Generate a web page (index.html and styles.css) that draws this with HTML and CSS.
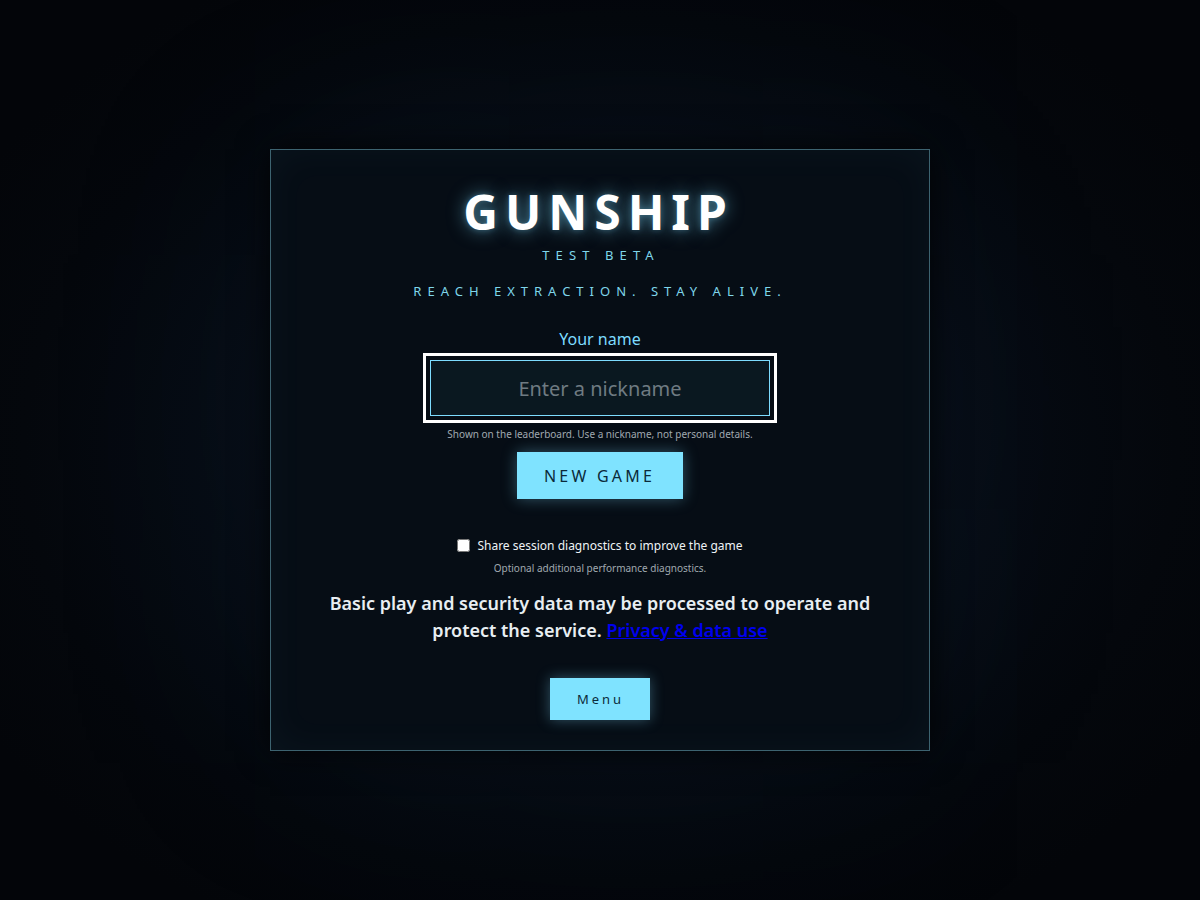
FILE: index.html
```html
<!DOCTYPE html>
<html lang="en">
<head>
<meta charset="utf-8">
<title>GUNSHIP</title>
<link rel="stylesheet" href="styles.css">
</head>
<body>
<main class="stage">
  <section class="panel">
    <h1 class="title">GUNSHIP</h1>
    <div class="subtitle">TEST BETA</div>
    <div class="tagline">REACH EXTRACTION. STAY ALIVE.</div>
    <label class="name-label" for="nick">Your name</label>
    <input class="name-input" id="nick" type="text" placeholder="Enter a nickname">
    <div class="hint">Shown on the leaderboard. Use a nickname, not personal details.</div>
    <button class="btn btn-primary" type="button">NEW GAME</button>
    <label class="check-row"><input type="checkbox" class="check"> Share session diagnostics to improve the game</label>
    <div class="check-hint">Optional additional performance diagnostics.</div>
    <p class="notice">Basic play and security data may be processed to operate and protect the service. <a href="#" class="notice-link">Privacy &amp; data use</a></p>
    <button class="btn btn-menu" type="button">Menu</button>
  </section>
</main>
</body>
</html>
```
FILE: styles.css
```css
* { box-sizing: border-box; }
html, body { height: 100%; }
body {
  margin: 0;
  font-family: "Noto Sans", "DejaVu Sans", sans-serif;
  background: radial-gradient(ellipse 60% 60% at 50% 50%, #0a1420 0%, #070d16 45%, #04070c 80%, #030509 100%);
  color: #e8eef2;
}
.stage {
  height: 900px;
  display: flex;
  align-items: center;
  justify-content: center;
}
.panel {
  width: 660px;
  height: 602px;
  border: 1px solid #3d6370;
  background: #060d15;
  box-shadow: 0 0 30px rgba(0,0,0,0.85), 0 0 240px rgba(30,70,110,0.12), inset 0 0 40px rgba(125,220,255,0.04);
  padding: 29px 48px 30px;
  display: flex;
  flex-direction: column;
  align-items: center;
  text-align: center;
}
.title {
  margin: 0 0 2px -3px;
  font-size: 48px;
  font-weight: 700;
  letter-spacing: 7px;
  color: #fff;
  line-height: 65px;
  text-shadow: 0 0 18px rgba(125,220,255,0.55), 0 0 6px rgba(125,220,255,0.3);
}
.subtitle {
  font-size: 13px;
  letter-spacing: 6.1px;
  margin-left: 2px;
  color: #7fd6ea;
  line-height: 18px;
}
.tagline {
  margin-top: 18px;
  font-size: 13px;
  letter-spacing: 6px;
  margin-left: 0;
  color: #7fd6ea;
  line-height: 18px;
}
.name-label {
  margin-top: 28px;
  font-size: 16px;
  color: #7ddcff;
  line-height: 22px;
}
.name-input {
  margin-top: 10px;
  width: 340px;
  height: 56px;
  border: 1px solid #7ddcff;
  background: #0a1820;
  color: #e8eef2;
  font-family: inherit;
  font-size: 20px;
  text-align: center;
  outline: 3px solid #ffffff;
  outline-offset: 4px;
}
.name-input::placeholder { color: #6f7b82; }
.hint {
  margin-top: 11px;
  font-size: 10px;
  line-height: 14px;
  color: #a0a9b0;
}
.btn {
  font-family: inherit;
  border: none;
  background: #7fe3ff;
  color: #0b2a3a;
  cursor: pointer;
  box-shadow: 0 0 14px rgba(125,220,255,0.35);
}
.btn-primary {
  margin-top: 11px;
  width: 166px;
  height: 47px;
  font-size: 16px;
  letter-spacing: 3.2px;
  padding-left: 5px;
}
.check-row {
  margin-top: 38px;
  display: flex;
  align-items: center;
  font-size: 12px;
  line-height: 17px;
  color: #eef3f6;
}
.check {
  margin: 0 7px 0 0;
  width: 13px;
  height: 13px;
}
.check-hint {
  margin-top: 7px;
  font-size: 10px;
  line-height: 14px;
  color: #a0a9b0;
}
.notice {
  margin: 15px 0 0;
  width: 562px;
  font-size: 18px;
  font-weight: 600;
  line-height: 27px;
  color: #e8eef2;
}
.notice-link { color: #0000ee; }
.btn-menu {
  margin-top: 34px;
  width: 100px;
  height: 42px;
  font-size: 13px;
  letter-spacing: 3px;
  padding-left: 7px;
}
```
